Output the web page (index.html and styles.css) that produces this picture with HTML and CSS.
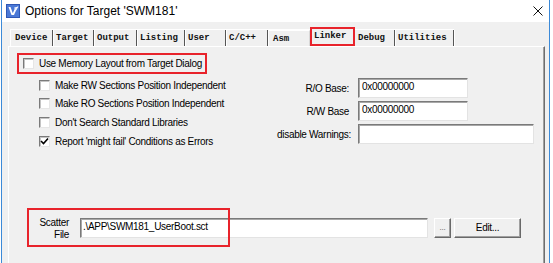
FILE: index.html
```html
<!DOCTYPE html>
<html>
  <head>
    <title>Options for Target 'SWM181'</title>
    <link rel="stylesheet" href="styles.css">
  </head>
  <body>
    <div class="window">
      <div class="titlebar">
        <svg class="appicon" viewBox="0 0 14 14">
          <rect x="0" y="0" width="14" height="14" fill="#2f57b5"/>
          <rect x="1" y="1" width="12" height="12" fill="#4a78d6"/>
          <path d="M2.5 3 L5.5 11 L8 11 L11.5 3 L9.5 3 L6.8 9.2 L4.5 3 Z" fill="#fff"/>
          <path d="M8.5 3.5 L10 5.5 L12 2.5" stroke="#e8f0ff" stroke-width="1.2" fill="none"/>
        </svg>
        <span class="title">Options for Target 'SWM181'</span>
        <svg class="close" viewBox="0 0 10 10">
          <path d="M0.5 0.5 L9.5 9.5 M9.5 0.5 L0.5 9.5" stroke="#111" stroke-width="1"/>
        </svg>
      </div>
      <div class="client">
        <div class="tabs">
          <span class="tab">Device</span>
          <span class="tab">Target</span>
          <span class="tab">Output</span>
          <span class="tab">Listing</span>
          <span class="tab">User</span>
          <span class="tab">C/C++</span>
          <span class="tab plain">Asm</span>
          <span class="tab active">Linker</span>
          <span class="tab">Debug</span>
          <span class="tab">Utilities</span>
        </div>
        <div class="panel">
          <label class="check marked">
            <span class="box"></span>Use Memory Layout from Target Dialog
          </label>
          <div class="options">
            <div class="checks">
              <label class="check"><span class="box"></span>Make RW Sections Position Independent</label>
              <label class="check"><span class="box"></span>Make RO Sections Position Independent</label>
              <label class="check"><span class="box"></span>Don't Search Standard Libraries</label>
              <label class="check"><span class="box on">
                <svg viewBox="0 0 9 9"><path d="M1 4 L3.5 6.5 L8 1.5" stroke="#000" stroke-width="1.6" fill="none"/></svg>
              </span>Report 'might fail' Conditions as Errors</label>
            </div>
            <div class="bases">
              <span class="lbl">R/O Base:</span>
              <span class="field short">0x00000000</span>
              <span class="lbl">R/W Base</span>
              <span class="field short">0x00000000</span>
              <span class="lbl">disable Warnings:</span>
              <span class="field"></span>
            </div>
          </div>
          <div class="scatter">
            <span class="lbl">Scatter<br>File</span>
            <span class="field path">.\APP\SWM181_UserBoot.sct</span>
            <span class="btn browse">...</span>
            <span class="btn edit">Edit...</span>
            <span class="mark"></span>
          </div>
        </div>
      </div>
    </div>
  </body>
</html>
```

FILE: styles.css
```css
html, body {margin:0; height:100%; background:#fff; overflow:hidden;}
body {font-family:"Liberation Sans", Arial, sans-serif; font-size:10px; letter-spacing:-0.3px; color:#000;}

.window {margin-left:1px; width:547px; height:100%; border-left:1px solid #3c8ad8; border-right:1px solid #3c8ad8; display:flex; flex-direction:column;}

.titlebar {height:22px; flex:none; display:flex; align-items:center; background:#fff;}
.appicon {width:14px; height:14px; margin-left:4px;}
.title {margin-left:5px; font-family:"Liberation Sans", sans-serif; font-size:12px; letter-spacing:0; color:#000;}
.close {width:10px; height:10px; margin-left:auto; margin-right:6px;}

.client {flex:1; background:#f0f0f0; display:flex; flex-direction:column; padding-top:7px;}

.tabs {display:flex; margin-left:8px; height:16px; border-top:1px solid #fff; border-left:1px solid #fff; align-self:flex-start;}
.tab {font-family:"Liberation Mono", monospace; font-weight:bold; font-size:9px; letter-spacing:0; line-height:16px; padding-left:3px; border-right:1px solid #555; box-shadow:1px 0 0 #fff; color:#111; box-sizing:border-box;}
.tab:nth-child(1) {width:42px; padding-left:4px;}
.tab:nth-child(2) {width:41px;}
.tab:nth-child(3) {width:43px;}
.tab:nth-child(4) {width:48px;}
.tab:nth-child(5) {width:41px;}
.tab:nth-child(6) {width:42px;}
.tab:nth-child(7) {width:42px; padding-left:5px;}
.tab:nth-child(8) {width:45px;}
.tab:nth-child(9) {width:40px;}
.tab:nth-child(10) {width:59px;}
.tab.plain {border-right:1px solid #d8d8d8; border-top:1px solid #fff;}
.tab.active {outline:2px solid #e8232b; outline-offset:-2px; margin-top:-3px; height:19px; line-height:18px; padding-left:4px; background:#f0f0f0; border-right:none; box-shadow:none;}

.panel {flex:1; margin:0 4px 0 6px; border-top:1px solid #fff; border-left:1px solid #fff; border-right:1px solid #6e6e6e; box-shadow:inset -1px 0 0 #a0a0a0; padding:6px 0 0 8px;}

.check {display:flex; align-items:center; height:18.6px; white-space:nowrap;}
.box {width:11px; height:11px; flex:none; box-sizing:border-box; margin-right:5px; background:#fff; border-top:1px solid #7a7a7a; border-left:1px solid #7a7a7a; border-bottom:1px solid #e6e6e6; border-right:1px solid #e6e6e6; box-shadow:inset 1px 1px 0 #c4c4c4; display:flex; align-items:center; justify-content:center;}
.box svg {width:9px; height:9px;}

.check.marked {width:190px; height:21px; box-sizing:border-box; border:2px solid #e8232b; padding-left:4px;}

.options {display:flex; margin-top:1px;}
.checks {margin-left:22px; width:238px; flex:none; padding-top:1px;}
.bases {display:grid; grid-template-columns:72px auto; column-gap:9px; row-gap:3px; align-items:center; padding-top:3px; align-self:flex-start;}
.bases .lbl {text-align:right; white-space:nowrap;}

.field {display:block; box-sizing:border-box; height:20px; width:176px; background:#fff; border-top:1px solid #7a7a7a; border-left:1px solid #7a7a7a; border-bottom:1px solid #e3e3e3; border-right:1px solid #e3e3e3; box-shadow:inset 1px 1px 0 #a8a8a8; padding:1px 0 0 3px; line-height:14px; white-space:nowrap;}
.field.short {width:110px;}

.scatter {position:relative; display:flex; align-items:center; height:39px; margin-top:58px;}
.scatter .lbl {width:52px; text-align:right; line-height:12px; margin-top:3px;}
.field.path {width:348px; margin-left:11px; padding-left:2px;}
.btn {box-sizing:border-box; height:20px; display:flex; align-items:center; justify-content:center; background:#f0f0f0; border-top:1px solid #fff; border-left:1px solid #fff; border-right:1px solid #696969; border-bottom:1px solid #696969; box-shadow:inset -1px -1px 0 #a0a0a0;}
.btn.browse {width:17px; margin-left:6px; font-size:8px; color:#555;}
.btn.edit {width:67px; margin-left:3px;}
.mark {position:absolute; left:10px; top:0; width:203px; height:39px; box-sizing:border-box; border:2px solid #e8232b;}
```
